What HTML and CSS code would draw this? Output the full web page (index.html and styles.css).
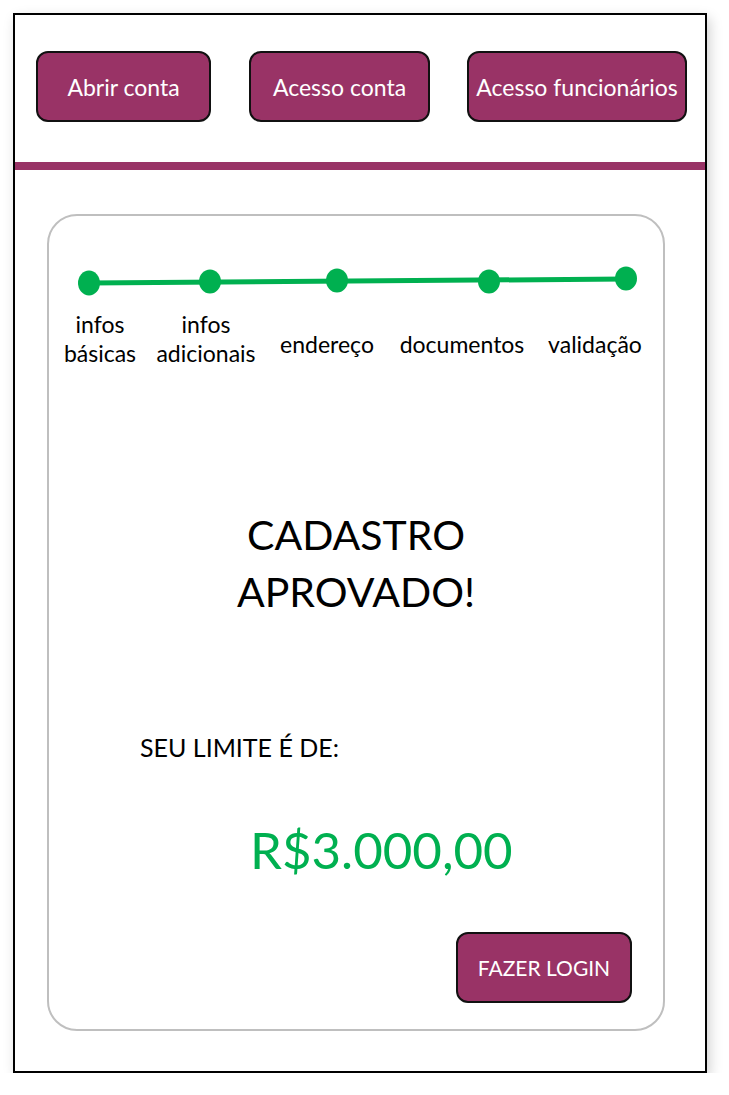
FILE: index.html
```html
<!DOCTYPE html>
<html lang="pt-BR">
<head>
<meta charset="utf-8">
<title>Cadastro aprovado</title>
<link rel="stylesheet" href="styles.css">
</head>
<body>
<div class="frame">
  <nav class="topnav">
    <button class="btn btn-abrir">Abrir conta</button>
    <button class="btn btn-acesso">Acesso conta</button>
    <button class="btn btn-func">Acesso funcionários</button>
  </nav>
  <div class="bar"></div>
  <section class="card">
    <svg class="stepper" width="618" height="40" viewBox="0 0 618 40">
      <line x1="42" y1="23" x2="579" y2="19" stroke="#00b050" stroke-width="5"/>
      <ellipse cx="42" cy="23" rx="11" ry="12.5" fill="#00b050"/>
      <ellipse cx="163" cy="21.5" rx="11" ry="12" fill="#00b050"/>
      <ellipse cx="290" cy="20.5" rx="11" ry="12" fill="#00b050"/>
      <ellipse cx="442" cy="21.5" rx="11" ry="12" fill="#00b050"/>
      <ellipse cx="579" cy="18.5" rx="11" ry="12" fill="#00b050"/>
    </svg>
    <div class="labels">
      <span class="lbl">infos<br>básicas</span>
      <span class="lbl">infos<br>adicionais</span>
      <span class="lbl single">endereço</span>
      <span class="lbl single">documentos</span>
      <span class="lbl single">validação</span>
    </div>
    <h1 class="title">CADASTRO<br>APROVADO!</h1>
    <p class="limit-label">SEU LIMITE É DE:</p>
    <p class="amount">R$3.000,00</p>
    <div class="actions">
      <button class="btn btn-login">FAZER LOGIN</button>
    </div>
  </section>
</div>
</body>
</html>
```

FILE: styles.css
```css
* { box-sizing: border-box; }
html, body { margin: 0; padding: 0; background: #fff; }
body { font-family: Lato, "Open Sans", sans-serif; color: #000; }

.frame {
  margin: 13px 0 0 13px;
  width: 694px;
  height: 1060px;
  border: 2px solid #000;
  background: #fff;
  box-shadow: 3px 5px 12px rgba(0,0,0,0.18);
}

.topnav {
  display: flex;
  padding: 36px 0 0 21px;
  gap: 38px;
}

.btn {
  font-family: Lato, "Open Sans", sans-serif;
  background: #993366;
  color: #fff;
  border: 2px solid #111;
  border-radius: 12px;
  height: 71px;
  font-size: 23px;
  padding: 0;
  display: flex;
  align-items: center;
  justify-content: center;
  white-space: nowrap;
}
.btn-abrir { width: 175px; }
.btn-acesso { width: 181px; }
.btn-func { width: 220px; margin-left: -1px; }

.bar {
  height: 8px;
  background: #993366;
  margin-top: 40px;
}

.card {
  margin: 44px 0 0 32px;
  width: 618px;
  height: 817px;
  border: 2px solid #bfbfbf;
  border-radius: 30px;
  display: flex;
  flex-direction: column;
}

.stepper {
  display: block;
  margin-top: 44px;
  margin-left: -2px;
}

.labels {
  display: grid;
  grid-template-columns: 106px 106px 136px 134px 132px;
  align-items: end;
  margin-top: 10px;
  margin-left: -2px;
}
.lbl {
  text-align: center;
  font-size: 23px;
  line-height: 29px;
  white-space: nowrap;
}
.lbl.single { margin-bottom: 9px; }

.title {
  margin: 138px 0 0;
  text-align: center;
  font-weight: 400;
  font-size: 41px;
  line-height: 57px;
}

.limit-label {
  margin: 112px 0 0 91px;
  font-size: 25px;
  line-height: 30px;
}

.amount {
  margin: 58px 0 0 201px;
  color: #00b050;
  font-size: 51px;
  line-height: 60px;
}

.actions {
  margin-top: auto;
  display: flex;
  justify-content: flex-end;
  padding: 0 31px 26px 0;
}
.btn-login { width: 176px; height: 71px; font-size: 21px; }
```
